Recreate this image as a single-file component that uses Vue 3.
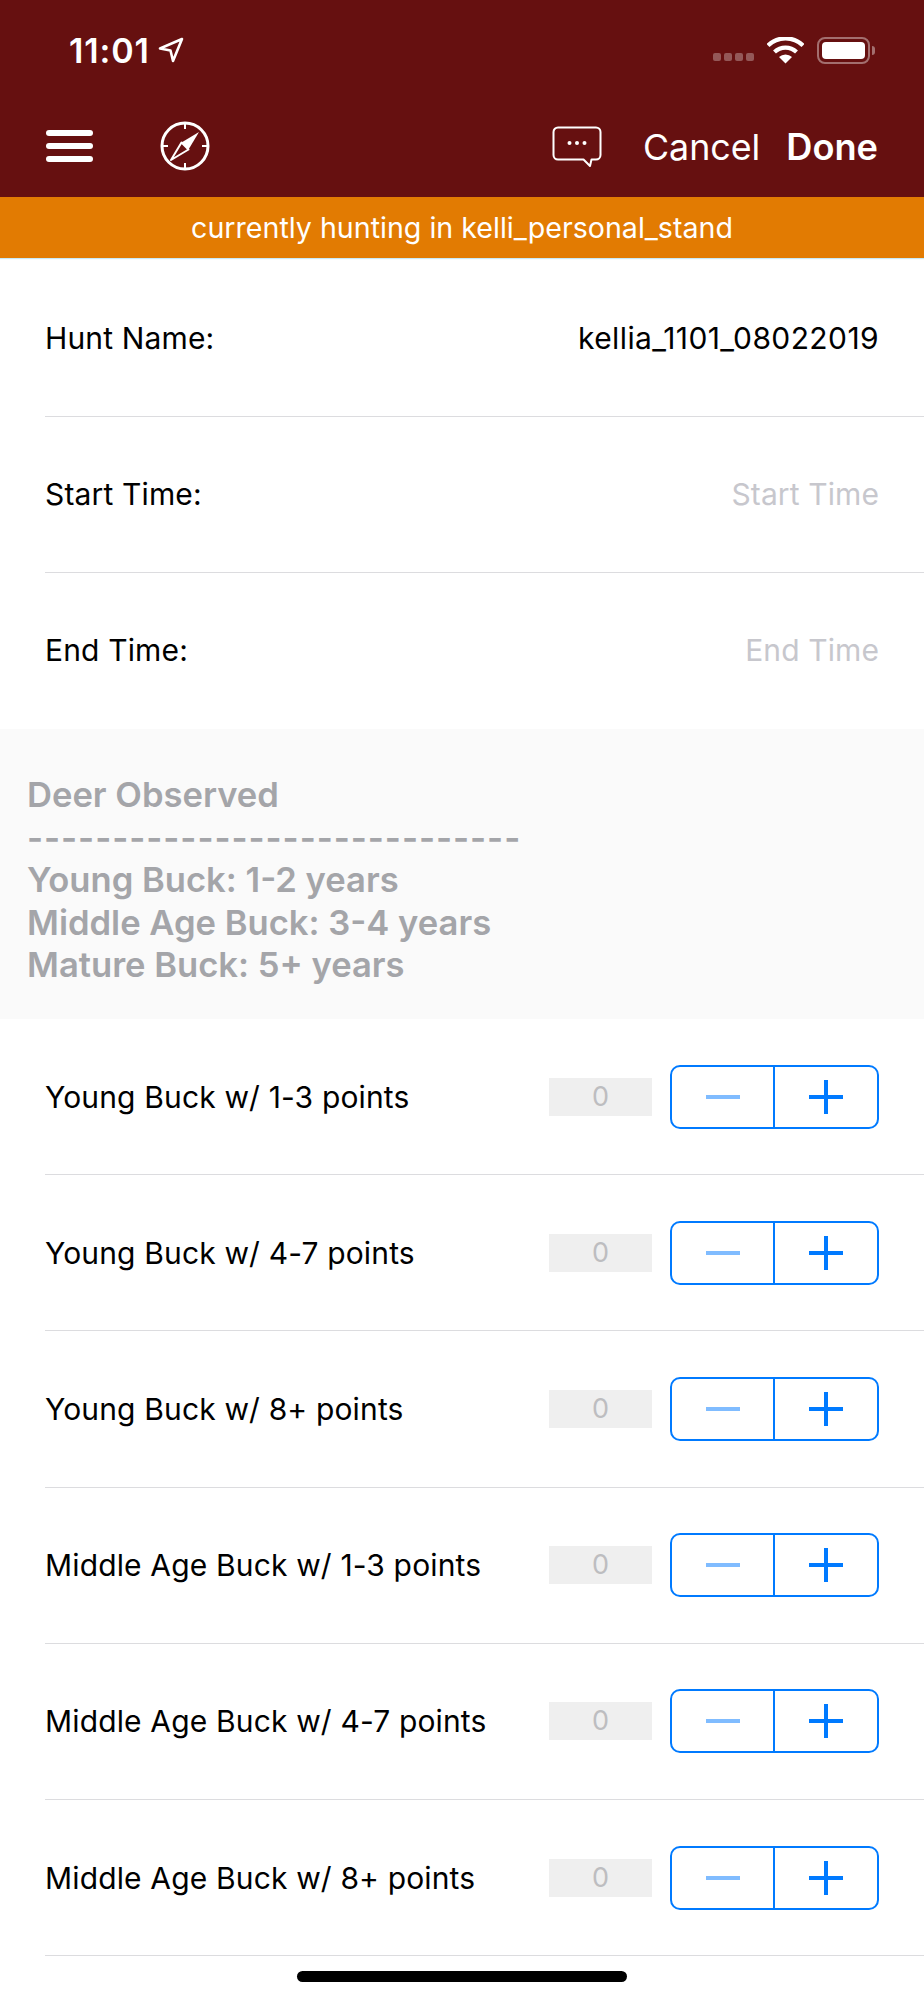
<template>
  <div class="screen">
    <header class="top">
      <div class="status">
        <div class="status-left">
          <span class="time">11:01</span>
          <svg class="loc" width="26" height="26" viewBox="0 0 26 26">
            <path d="M24 2 2 11.5l10.5 2 2.5 10.5z" fill="none" stroke="#fff" stroke-width="2.6" stroke-linejoin="round" />
          </svg>
        </div>
        <div class="status-right">
          <div class="signal"><i v-for="n in 4" :key="n"></i></div>
          <svg class="wifi" width="37" height="27" viewBox="0 0 37 27">
            <path d="M1 8.5a25 25 0 0 1 35 0" fill="none" stroke="#fff" stroke-width="4.2" />
            <path d="M7.5 15a16 16 0 0 1 22 0" fill="none" stroke="#fff" stroke-width="4.2" />
            <path d="M18.5 26.5 12 20a9.5 9.5 0 0 1 13 0z" fill="#fff" />
          </svg>
          <div class="battery"><div class="battery-fill"></div></div>
          <div class="battery-nub"></div>
        </div>
      </div>
      <nav class="nav">
        <div class="nav-left">
          <div class="burger"><i></i><i></i><i></i></div>
          <svg class="compass" width="50" height="50" viewBox="0 0 50 50">
            <circle cx="25" cy="25" r="23" fill="none" stroke="#fff" stroke-width="3" />
            <path d="M25 3v5M25 42v5M3 25h5M42 25h5" stroke="#fff" stroke-width="2" />
            <path d="M39 11 28.5 28.5 21.5 21.5z" fill="#fff" />
            <path d="M11 39 21.5 21.5 28.5 28.5z" fill="none" stroke="#fff" stroke-width="2" stroke-linejoin="round" />
          </svg>
        </div>
        <div class="nav-right">
          <svg class="chat" width="50" height="42" viewBox="0 0 50 42">
            <path d="M6 1.5h38a4.500 4.500 0 0 1 4.500 4.500v23a4.500 4.500 0 0 1-4.500 4.500h-4.500l-1.500 6.500-6.500-6.500H6A4.500 4.500 0 0 1 1.500 29V6A4.500 4.500 0 0 1 6 1.500z" fill="none" stroke="#fff" stroke-width="2" stroke-linejoin="round" />
            <circle cx="17.500" cy="17" r="2" fill="#fff" />
            <circle cx="25" cy="17" r="2" fill="#fff" />
            <circle cx="32.500" cy="17" r="2" fill="#fff" />
          </svg>
          <span class="cancel">Cancel</span>
          <span class="done">Done</span>
        </div>
      </nav>
    </header>
    <div class="banner">currently hunting in kelli_personal_stand</div>

    <section class="fields">
      <div v-for="f in fields" :key="f.label" class="row">
        <span class="label">{{ f.label }}</span>
        <span class="value" :class="{ placeholder: f.placeholder }">{{ f.value }}</span>
      </div>
    </section>

    <div class="deer-info">
      <div>Deer Observed</div>
      <div class="dashes">-----------------------------</div>
      <div>Young Buck: 1-2 years</div>
      <div>Middle Age Buck: 3-4 years</div>
      <div>Mature Buck: 5+ years</div>
    </div>

    <section>
      <div v-for="c in counters" :key="c" class="row counter">
        <span class="label">{{ c }}</span>
        <div class="controls">
          <div class="count">0</div>
          <div class="stepper">
            <div class="step minus"><i class="h"></i></div>
            <div class="step plus"><i class="h"></i><i class="v"></i></div>
          </div>
        </div>
      </div>
    </section>

    <div class="home-bar"></div>
  </div>
</template>

<script setup>
const fields = [
  { label: 'Hunt Name:', value: 'kellia_1101_08022019' },
  { label: 'Start Time:', value: 'Start Time', placeholder: true },
  { label: 'End Time:', value: 'End Time', placeholder: true }
]

const counters = [
  'Young Buck w/ 1-3 points',
  'Young Buck w/ 4-7 points',
  'Young Buck w/ 8+ points',
  'Middle Age Buck w/ 1-3 points',
  'Middle Age Buck w/ 4-7 points',
  'Middle Age Buck w/ 8+ points'
]
</script>

<style>
html, body {
  margin: 0;
  background: #fff;
}
</style>

<style scoped>
.screen {
  position: relative;
  width: 924px;
  height: 2000px;
  overflow: hidden;
  background: #fff;
  font-family: Inter, "Liberation Sans", sans-serif;
}

.top {
  height: 197px;
  background: #661010;
  color: #fff;
}

.status {
  height: 94px;
  display: flex;
  justify-content: space-between;
  align-items: center;
  padding: 6px 49px 0 69px;
  box-sizing: border-box;
}

.status-left {
  display: flex;
  align-items: center;
  gap: 8px;
}

.time {
  font-size: 34px;
  font-weight: 600;
  letter-spacing: 0.9px;
}

.status-right {
  display: flex;
  align-items: center;
}

.signal {
  display: flex;
  gap: 3px;
  margin: 14px 13px 0 0;
}

.signal i {
  width: 8px;
  height: 8px;
  border-radius: 2px;
  background: rgba(255, 255, 255, 0.3);
}

.battery {
  width: 53px;
  height: 27px;
  margin-left: 13px;
  padding: 3px;
  box-sizing: border-box;
  border: 2px solid rgba(255, 255, 255, 0.4);
  border-radius: 8px;
}

.battery-fill {
  height: 100%;
  background: #fff;
  border-radius: 4px;
}

.battery-nub {
  width: 3px;
  height: 9px;
  margin-left: 2px;
  background: rgba(255, 255, 255, 0.4);
  border-radius: 0 3px 3px 0;
}

.nav {
  height: 103px;
  display: flex;
  justify-content: space-between;
  align-items: center;
  padding: 0 46px;
}

.nav-left,
.nav-right {
  display: flex;
  align-items: center;
}

.burger {
  width: 47px;
  display: flex;
  flex-direction: column;
  gap: 7px;
}

.burger i {
  height: 6px;
  background: #fff;
  border-radius: 3px;
}

.compass {
  margin-left: 67px;
}

.chat {
  margin: 2px 41px 0 0;
}

.cancel,
.done {
  font-size: 36.200px;
  margin-top: 2px;
}

.cancel {
  font-size: 35.800px;
}

.done {
  margin-left: 26px;
  font-weight: 600;
}

.banner {
  height: 61px;
  line-height: 61px;
  text-align: center;
  background: #e27b02;
  color: #fff;
  font-size: 28.600px;
  box-shadow: 0 1px 1px rgba(120, 200, 230, 0.4);
  position: relative;
}

.fields {
  margin-top: 3px;
}

.row {
  height: 156px;
  margin-left: 45px;
  padding-right: 45px;
  display: flex;
  justify-content: space-between;
  align-items: center;
  box-sizing: border-box;
  border-bottom: 1px solid #dcdcdf;
  font-size: 30px;
  letter-spacing: 0.15px;
  color: #000;
}

.fields .row {
  padding-bottom: 2px;
}

.fields .row:last-child {
  border-bottom: none;
}

.counter {
  height: 156.200px;
}

.value {
  letter-spacing: 0.4px;
}

.placeholder {
  color: #c7c7cd;
  letter-spacing: 0.1px;
}

.deer-info {
  height: 290px;
  padding: 44px 27px 0;
  box-sizing: border-box;
  background: #fafafa;
  color: #a4a5a9;
  font-size: 34.600px;
  font-weight: 600;
  line-height: 42.500px;
}

.dashes {
  letter-spacing: 0.95px;
}

.controls {
  display: flex;
  align-items: center;
  gap: 18px;
}

.count {
  width: 103px;
  height: 38px;
  line-height: 38px;
  text-align: center;
  background: #efefef;
  color: #bdbdc0;
  font-size: 27px;
  letter-spacing: 0;
}

.stepper {
  width: 209px;
  height: 64px;
  display: flex;
  box-sizing: border-box;
  border: 2px solid #007aff;
  border-radius: 10px;
}

.step {
  position: relative;
  flex: 1;
}

.minus {
  flex: none;
  width: 103px;
  box-sizing: border-box;
  border-right: 2px solid #007aff;
}

.step i {
  position: absolute;
  background: #007aff;
}

.step .h {
  width: 34px;
  height: 4px;
  left: 50%;
  top: 50%;
  margin: -2px 0 0 -17px;
}

.step .v {
  width: 4px;
  height: 34px;
  left: 50%;
  top: 50%;
  margin: -17px 0 0 -2px;
}

.minus .h {
  background: #80bcff;
}

.home-bar {
  position: absolute;
  left: 297px;
  top: 1971px;
  width: 330px;
  height: 11px;
  border-radius: 6px;
  background: #000;
}
</style>
